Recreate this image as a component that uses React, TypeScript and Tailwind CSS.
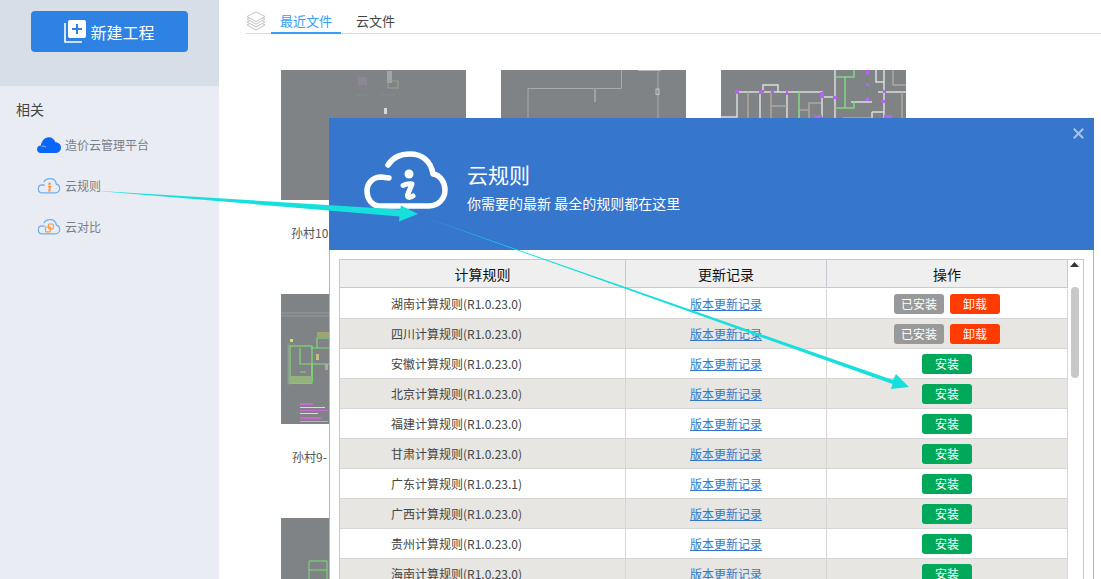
const CLOUD = "M32 19 C37 11 45 8 54 8 C66 8 75 15 77 28 C84 29 89 36 89 44 C89 53 82 60 73 60 L24 60 C16 60 11 53 11 45 C11 37 17 31 25 31 L33 32";

function CloudFilled() {
  return (
    <svg width="24" height="16" viewBox="0 0 24 16" className="shrink-0">
      <path d="M4 16 C1.5 16 0 14.3 0 12.4 C0 10.2 1.7 8.6 3.8 8.6 C4.6 3.4 8 0.2 11.8 0.2 C15 0.2 17.4 2.2 18.4 5.2 C21.6 5.2 24 7.6 24 10.6 C24 13.8 21.8 16 19 16 Z" fill="#0a66f6" />
      <path d="M4.5 9.5 C6 8.8 7.5 9 9 10.4" stroke="#e9edf3" strokeWidth="0.6" fill="none" />
    </svg>
  );
}

function CloudInfo() {
  return (
    <svg width="24" height="18" viewBox="6 4 88 62" className="shrink-0">
      <path d={CLOUD} fill="none" stroke="#6cb0f2" strokeWidth="4.5" strokeLinecap="round" strokeLinejoin="round" />
      <circle cx="52" cy="27" r="5" fill="#f59a4a" />
      <path d="M46 37 L55 37 L50 52 L56 52" fill="none" stroke="#f59a4a" strokeWidth="6" />
    </svg>
  );
}

function CloudCompare() {
  return (
    <svg width="24" height="18" viewBox="6 4 88 62" className="shrink-0">
      <path d={CLOUD} fill="none" stroke="#6cb0f2" strokeWidth="4.5" strokeLinecap="round" strokeLinejoin="round" />
      <rect x="37" y="35" width="18" height="18" rx="3" fill="none" stroke="#f59a4a" strokeWidth="4" />
      <rect x="48" y="24" width="18" height="18" rx="3" fill="none" stroke="#f59a4a" strokeWidth="4" />
    </svg>
  );
}

function CloudLarge() {
  return (
    <svg width="86" height="62" viewBox="7 4 86 62" className="shrink-0">
      <path d={CLOUD} fill="none" stroke="#fff" strokeWidth="5.5" strokeLinecap="round" strokeLinejoin="round" />
      <circle cx="53" cy="28" r="4.5" fill="#fff" />
      <path d="M47 39.5 C50 38 53 37.5 56 38 L51.5 49 C51 52 54 52 57 50" fill="none" stroke="#fff" strokeWidth="5" strokeLinecap="round" strokeLinejoin="round" />
    </svg>
  );
}

function NewIcon() {
  return (
    <svg width="23" height="23" viewBox="0 0 23 23" className="shrink-0">
      <path d="M1 3 V22 H18" fill="none" stroke="#fff" strokeWidth="1.6" />
      <rect x="4" y="0" width="18" height="18" rx="2" fill="#fff" />
      <path d="M13 4 V14 M8 9 H18" stroke="#2d82e3" strokeWidth="2" />
    </svg>
  );
}

function Layers() {
  return (
    <svg width="20" height="20" viewBox="0 0 20 20" className="shrink-0">
      <g fill="#fff" stroke="#c4c4c4" strokeWidth="1" strokeLinejoin="round">
        <path d="M10 9.5 L19 14 L10 19 L1 14 Z" />
        <path d="M10 6.5 L19 11 L10 16 L1 11 Z" />
        <path d="M10 3.5 L19 8 L10 13 L1 8 Z" />
        <path d="M10 1 L19 5.5 L10 10.5 L1 5.5 Z" />
      </g>
    </svg>
  );
}

function Thumb1() {
  return (
    <svg width="185" height="130" viewBox="0 0 185 130">
      <rect width="185" height="130" fill="#7f8386" />
      <rect x="77" y="7" width="9" height="8" fill="#8b8794" />
      <rect x="106" y="1" width="5" height="12" fill="#a3a5a8" />
      <rect x="107" y="11" width="10" height="7" fill="none" stroke="#9aa08f" strokeWidth="1" />
      <path d="M74 25 H87 M101 25 H115" stroke="#8d8a9c" strokeWidth="1" strokeDasharray="2 1.5" />
      <rect x="103" y="38" width="3" height="6" fill="#d8d8d8" />
    </svg>
  );
}

function Thumb2() {
  return (
    <svg width="185" height="130" viewBox="0 0 185 130">
      <rect width="185" height="130" fill="#7f8386" />
      <path d="M27 48 V18.5 H120.5 V0 M157 0 V48" fill="none" stroke="#a9abad" strokeWidth="1" />
      <path d="M94 18 V32" stroke="#a0a2a4" strokeWidth="2" />
      <path d="M137 0.5 H160" stroke="#b5b7b8" strokeWidth="1" />
      <rect x="155" y="19" width="3" height="5.5" fill="none" stroke="#c4c5c6" strokeWidth="1" />
    </svg>
  );
}

function Thumb3() {
  return (
    <svg width="185" height="130" viewBox="0 0 185 130">
      <rect width="185" height="130" fill="#7f8386" />
      <g fill="none" stroke="#dcdcdc" strokeWidth="1.5">
        <path d="M0 47 H16 V22 H101 V47" />
        <path d="M42 22 V15 H57 V22" />
        <path d="M39 22 V48 M66 22 V48" />
        <path d="M101 27 H114 M114 0 V48" />
        <path d="M155 0 V12 H163 M163 0 V48 M157 22 H185" />
        <path d="M151 42 H163 M151 42 V48" />
        <path d="M130 32 H151" />
      </g>
      <g fill="none" stroke="#b0a89f" strokeWidth="1.5">
        <path d="M27 22 V48 M50 22 V48 M50 36 H66" />
        <path d="M88 48 V33 H100 M78 40 H88 M78 40 V48" />
        <path d="M122 48 H150" />
        <path d="M172 0 V15 H185 M181 22 V48" />
      </g>
      <g fill="none" stroke="#82d882" strokeWidth="1.5">
        <path d="M78 22 V48" />
        <path d="M114 7 H133 V0 M124 7 V38 M114 38 H133 V31" />
      </g>
      <path d="M146 0 V30" stroke="#6c8c72" strokeWidth="1.5" />
      <g fill="#b266e8">
        <rect x="14" y="20" width="4" height="4" />
        <rect x="38" y="20" width="5" height="4" />
        <rect x="50" y="20" width="3" height="4" />
        <rect x="65" y="20" width="2" height="5" />
        <rect x="99" y="22" width="4" height="6" />
        <rect x="112" y="26" width="4" height="3" />
        <rect x="145" y="0" width="3" height="5" />
        <rect x="145" y="13" width="3" height="3" />
        <rect x="145" y="27" width="3" height="4" />
        <rect x="160" y="30" width="4" height="3" />
        <rect x="162" y="20" width="3" height="3" />
        <rect x="93" y="45" width="8" height="3" />
        <rect x="163" y="45" width="8" height="3" />
      </g>
    </svg>
  );
}

function Thumb4() {
  return (
    <svg width="185" height="130" viewBox="0 0 185 130">
      <rect width="185" height="130" fill="#7f8386" />
      <path d="M0 19 H48 M0 22 H48" stroke="#9a9c9e" strokeWidth="1" />
      <rect x="8" y="52" width="23" height="37" fill="none" stroke="#7fdc74" strokeWidth="1.2" />
      <path d="M9 51 V89 H31 M19 54 V70 H31 V87 M30 54 H48 M36 54 V44 H48 M31 70 H48 M25 78 H19" fill="none" stroke="#7fdc74" strokeWidth="1.2" />
      <rect x="9" y="82" width="22" height="7" fill="#93b37c" />
      <rect x="6" y="49" width="3" height="42" fill="#a08aa0" opacity="0.6" />
      <rect x="9" y="45" width="3" height="3" fill="#d8e060" />
      <rect x="36" y="38" width="12" height="5" fill="#a0a472" />
      <rect x="35" y="60" width="3" height="6" fill="#c9b88a" />
      <rect x="44" y="70" width="3" height="6" fill="#b5a79e" />
      <rect x="19" y="109" width="13" height="2" fill="#c96ad4" />
      <rect x="19" y="113" width="25" height="1" fill="#d8d8e0" />
      <rect x="19" y="116" width="28" height="1" fill="#c96ad4" />
      <rect x="19" y="119" width="18" height="1" fill="#d8d8e0" />
      <rect x="19" y="123" width="22" height="2" fill="#c96ad4" />
      <rect x="19" y="127" width="28" height="1" fill="#5fd8d8" />
    </svg>
  );
}

function Thumb5() {
  return (
    <svg width="185" height="130" viewBox="0 0 185 130">
      <rect width="185" height="130" fill="#7f8386" />
      <path d="M28 61 V43 H46 V61 M28 52 H46" fill="none" stroke="#7fdc74" strokeWidth="1" />
    </svg>
  );
}

const rules: [string, string, boolean][] = [
  ["湖南计算规则", "R1.0.23.0", true],
  ["四川计算规则", "R1.0.23.0", true],
  ["安徽计算规则", "R1.0.23.0", false],
  ["北京计算规则", "R1.0.23.0", false],
  ["福建计算规则", "R1.0.23.0", false],
  ["甘肃计算规则", "R1.0.23.0", false],
  ["广东计算规则", "R1.0.23.1", false],
  ["广西计算规则", "R1.0.23.0", false],
  ["贵州计算规则", "R1.0.23.0", false],
  ["海南计算规则", "R1.0.23.0", false],
];

function Btn({ color, label }: { color: string; label: string }) {
  return (
    <span className={`flex h-[20px] w-[50px] items-center justify-center rounded-[3px] text-[12px] leading-none text-white ${color}`}>
      {label}
    </span>
  );
}

export default function App() {
  return (
    <div className="relative flex h-[579px] w-[1101px] overflow-hidden bg-white font-['Noto_Sans_CJK_SC','Liberation_Sans',sans-serif]">
      <aside className="flex w-[219px] shrink-0 flex-col bg-[#e9edf3]">
        <div className="h-[86px] bg-[#d7dee7] px-[31px] pt-[11px]">
          <div className="flex h-[41px] items-center justify-center gap-[3px] rounded-[4px] bg-[#2d82e3] text-[16px] text-white">
            <NewIcon />
            <span>新建工程</span>
          </div>
        </div>
        <div className="pl-[16px] pt-[13px] text-[14px] leading-[20px] text-[#444]">相关</div>
        <div className="mt-[5px] flex flex-col text-[12px] text-[#77808a]">
          <div className="flex h-[41px] items-center gap-[4px] pl-[37px]"><CloudFilled /><span>造价云管理平台</span></div>
          <div className="flex h-[41px] items-center gap-[4px] pl-[37px]"><CloudInfo /><span>云规则</span></div>
          <div className="flex h-[41px] items-center gap-[4px] pl-[37px]"><CloudCompare /><span>云对比</span></div>
        </div>
      </aside>

      <main className="min-w-0 flex-1">
        <div className="ml-[27px] flex h-[34px] items-end border-b border-[#d9d9d9]">
          <div className="mb-[2px] w-[25px]"><Layers /></div>
          <div className="mb-[-1px] flex h-[24px] w-[70px] items-center justify-center border-b-2 border-[#33a0f5] text-[13px] text-[#33a0f5]">最近文件</div>
          <div className="ml-[15px] flex h-[24px] items-center text-[13px] text-[#444]">云文件</div>
        </div>
        <div className="grid grid-cols-[185px_185px_185px] gap-x-[35px] pl-[62px] pt-[36px]">
          <div className="h-[224px]">
            <Thumb1 />
            <div className="pl-[10px] pt-[24px] text-[12px] leading-[18px] text-[#555]">孙村10</div>
          </div>
          <div className="h-[224px]"><Thumb2 /></div>
          <div className="h-[224px]"><Thumb3 /></div>
          <div className="h-[224px]">
            <Thumb4 />
            <div className="pl-[11px] pt-[24px] text-[12px] leading-[18px] text-[#555]">孙村9-</div>
          </div>
          <div className="col-span-2" />
          <div className="h-[130px]"><Thumb5 /></div>
        </div>
      </main>

      {/* dialog over the page */}
      <div className="absolute bottom-0 left-[329px] top-[118px] w-[765px] border-x border-[#9db8e4] bg-white">
        <div className="relative -mx-px flex h-[132px] items-start bg-[#3676cc] pl-[34px] pt-[32px] text-white">
          <CloudLarge />
          <div className="ml-[18px] flex flex-col">
            <div className="mt-[6px] text-[21px] leading-[36px]">云规则</div>
            <div className="text-[14px] leading-[22px]">你需要的最新 最全的规则都在这里</div>
          </div>
          <svg width="11" height="11" viewBox="0 0 11 11" className="absolute right-[10px] top-[10px]">
            <path d="M0.8 0.8 L10.2 10.2 M10.2 0.8 L0.8 10.2" stroke="#a6c4ec" strokeWidth="2" />
          </svg>
        </div>
        <div className="ml-[9px] mt-[9px] flex w-[745px] border border-b-0 border-[#c8c8c8]">
          <div className="w-[728px] shrink-0">
            <div className="flex h-[28px] items-center border-b border-[#c5c9d6] bg-[#efefef] text-center text-[14px] text-[#111]">
              <div className="flex h-full w-[286px] items-center justify-center border-r border-[#c5c9d6] pt-[2px]">计算规则</div>
              <div className="flex h-full w-[201px] items-center justify-center border-r border-[#c5c9d6] pt-[2px]">更新记录</div>
              <div className="flex h-full w-[241px] items-center justify-center border-r border-[#c5c9d6] pt-[2px]">操作</div>
            </div>
            <div className="mt-px">
              {rules.map(([name, ver, installed], i) => (
                <div
                  key={name}
                  className={`flex h-[30px] items-stretch border-b border-[#d6d6d6] text-[12px] ${i % 2 === 1 ? "bg-[#e7e6e2]" : "bg-white"}`}
                >
                  <div className="flex w-[286px] items-center border-r border-[#d6d6d6] pl-[51px] text-[#444]">
                    {name}({ver})
                  </div>
                  <div className="flex w-[201px] items-center justify-center border-r border-[#d6d6d6]">
                    <span className="text-[#3676cc] underline">版本更新记录</span>
                  </div>
                  <div className="flex w-[241px] items-center justify-center gap-[6px] border-r border-[#d6d6d6]">
                    {installed ? (
                      <>
                        <Btn color="bg-[#999999]" label="已安装" />
                        <Btn color="bg-[#ff3b00]" label="卸载" />
                      </>
                    ) : (
                      <Btn color="bg-[#00a85a]" label="安装" />
                    )}
                  </div>
                </div>
              ))}
            </div>
          </div>
          <div className="flex w-[15px] flex-col items-center pr-[2px] pt-[2px]">
            <svg width="9" height="5" viewBox="0 0 9 5" className="shrink-0"><path d="M4.5 0 L9 5 H0 Z" fill="#333" /></svg>
            <div className="mt-[20px] h-[91px] w-[8px] rounded-[4px] bg-[#c8c8c8]" />
          </div>
        </div>
      </div>

      {/* annotation arrows */}
      <svg className="pointer-events-none absolute inset-0" width="1101" height="579" viewBox="0 0 1101 579">
        <polygon points="92,190.5 400,209.5 401,205.5 418,214 399,221.5 399.5,216.5" fill="#17dfdb" />
        <polygon points="421,216 893,380 896,374 909,387 891,389 892.5,384" fill="#17dfdb" />
      </svg>
    </div>
  );
}
